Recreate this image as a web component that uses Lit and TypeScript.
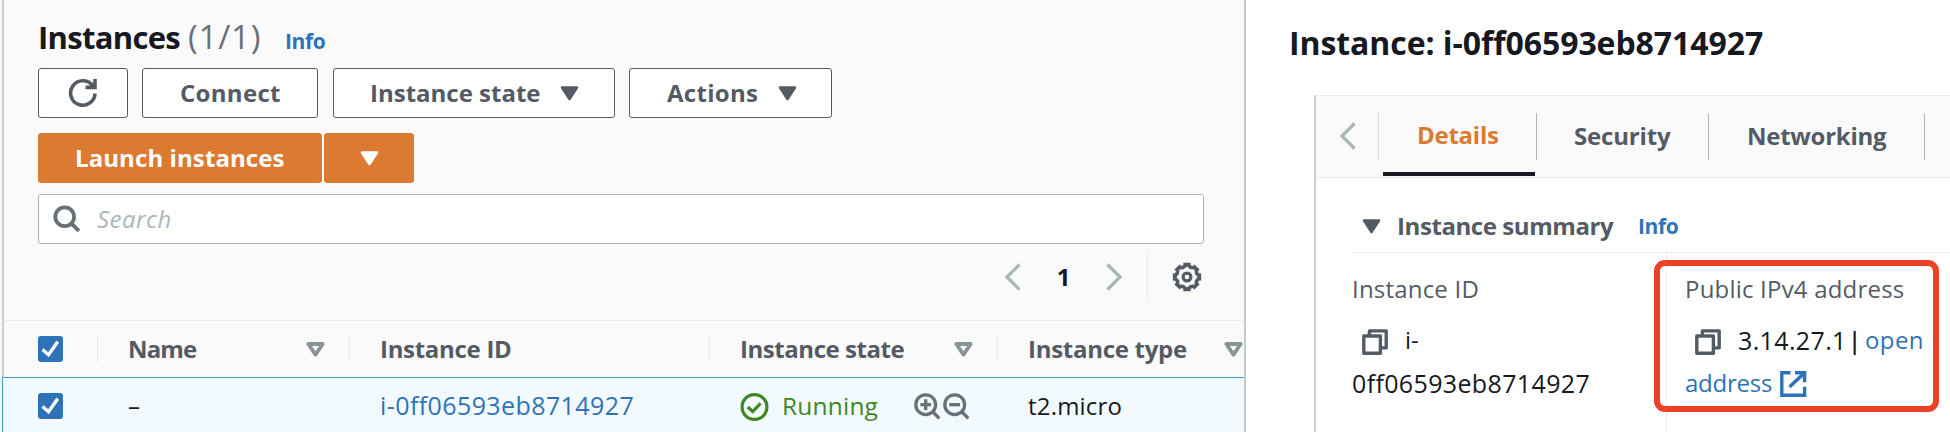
import { LitElement, html, css, svg } from "lit";
import { customElement } from "lit/decorators.js";

const caret = html`<svg class="caret" width="19" height="15" viewBox="0 0 19 15"><path d="M2 1.5h15L9.5 13z" fill="currentColor" stroke="currentColor" stroke-width="2.6" stroke-linejoin="round"/></svg>`;
const sort = html`<svg class="sort" width="19" height="15" viewBox="0 0 19 15"><path d="M2.3 2h14.4L9.5 12.6z" fill="none" stroke="#879596" stroke-width="3.8" stroke-linejoin="round"/></svg>`;
const chevron = (dir: "left" | "right") => html`<svg width="17" height="28" viewBox="0 0 17 28"><path d=${dir === "left" ? "M15.5 1.5L3 14L15.5 26.5" : "M1.5 1.5L14 14L1.5 26.5"} fill="none" stroke="#aab7b8" stroke-width="3.3"/></svg>`;
const refresh = html`<svg width="30" height="30" viewBox="0 0 30 30" fill="none" stroke="#545b64" stroke-width="3.6"><path d="M27 15.5A12.2 12.2 0 1 1 24.5 7.6"/><path d="M27 1v8.4H17.5" /><path d="M21 9l5-5v5z" fill="#545b64" stroke-width="1"/></svg>`;
const magnifier = html`<svg width="28" height="28" viewBox="0 0 28 28" fill="none" stroke="#687078" stroke-width="3.8"><circle cx="11.7" cy="11.7" r="9.4"/><path d="M18.3 18.3l7.6 7.6"/></svg>`;
const zoomIcon = (plus: boolean) => html`<svg width="27" height="27" viewBox="0 0 27 27" fill="none" stroke="#687078" stroke-width="3.3"><circle cx="11.7" cy="11.7" r="9.9"/><path d="M19 19l6.3 6.3"/><path d="M6.3 11.7h10.8"/>${plus ? svg`<path d="M11.7 6.3v10.8"/>` : ""}</svg>`;
const check = html`<svg class="box" width="25" height="26" viewBox="0 0 25 26"><rect width="25" height="26" rx="3" fill="#2e73b8"/><path d="M4.5 13.5l6 5.2L19.7 5.8" fill="none" stroke="#fff" stroke-width="3.4"/></svg>`;
const running = html`<svg width="29" height="28" viewBox="0 0 29 28" fill="none" stroke="#3f8624" stroke-width="3.2"><circle cx="14.5" cy="14" r="12.4"/><path d="M7.8 14l5 4.6 7.7-8.2"/></svg>`;
const copy = html`<svg class="copy" width="26" height="26" viewBox="0 0 26 26" fill="none" stroke="#545b64" stroke-width="3.4" stroke-linejoin="round"><path d="M1.8 7h16.6v17.2H1.8z"/><path d="M7.4 7V1.9h16.8v17H18.4"/></svg>`;
const external = html`<svg class="ext" width="27" height="26" viewBox="0 0 27 26" fill="none" stroke="#2e73b8" stroke-width="3.4"><path d="M10.5 1.8H1.8v22.4h22.8v-8.4"/><path d="M15 1.8h9.6v9.4"/><path d="M9.5 16L24 2.2"/></svg>`;

function gearPath(): string {
  const n = 8, c = 15, outer = 14.6, inner = 12.4;
  const pts: string[] = [];
  const hole: string[] = [];
  for (let i = 0; i < n; i++) {
    const a = (i * 2 * Math.PI) / n - Math.PI / 2;
    for (const [off, r] of [[-0.25, outer], [0.25, outer], [0.3, inner], [0.485, inner]] as const) {
      pts.push(`${(c + r * Math.cos(a + off)).toFixed(2)} ${(c + r * Math.sin(a + off)).toFixed(2)}`);
    }
    for (const [off, r] of [[0, 10.6], [0.39, 8.5]] as const) {
      hole.push(`${(c + r * Math.cos(a + off)).toFixed(2)} ${(c + r * Math.sin(a + off)).toFixed(2)}`);
    }
  }
  return `M${pts.join("L")}ZM${hole.join("L")}Z`;
}
const gear = html`<svg width="30" height="30" viewBox="0 0 30 30"><path d=${gearPath()} fill="#545b64" fill-rule="evenodd"/><circle cx="15" cy="15" r="3.9" fill="none" stroke="#545b64" stroke-width="3.2"/></svg>`;

const shared = css`
  * { box-sizing: border-box; }
  svg { display: block; flex: none; }
  .info { color: #2e73b8; font-weight: 700; font-size: 21px; letter-spacing: -0.4px; }
  .t { display: block; padding-bottom: 2px; }
`;

@customElement("instance-list")
class InstanceList extends LitElement {
  static styles = [shared, css`
    :host { display: block; width: 1246px; height: 432px; padding-left: 2px; background: #f6f7f7; overflow: hidden; flex: none; }
    .panel { height: 432px; background: #fafafa; border-left: 2px solid #c9d0d1; border-right: 2px solid #c3cacc; display: flex; flex-direction: column; }
    .head { padding: 17px 38px 0 34px; height: 320px; flex: none; }
    .title { display: flex; align-items: baseline; height: 51px; line-height: 40px; font-size: 31px; color: #16191f; }
    .title b { letter-spacing: -0.7px; width: 150px; }
    .count { color: #687078; font-size: 33px; letter-spacing: 0.8px; width: 97px; }
    .buttons { display: flex; }
    .btn { display: flex; align-items: center; height: 50px; background: #fff; border: 1px solid #545b64; border-radius: 3px; color: #545b64; font-weight: 700; white-space: nowrap; }
    .refresh { width: 90px; justify-content: center; margin-right: 14px; }
    .connect { width: 176px; padding-left: 37px; letter-spacing: 0.3px; margin-right: 15px; }
    .state { width: 282px; padding: 0 35px 0 36px; justify-content: space-between; margin-right: 14px; }
    .actions { width: 203px; padding: 0 34px 0 37px; justify-content: space-between; letter-spacing: 0.29px; }
    .launch { margin: 15px 0 11px; gap: 2px; }
    .primary { background: #dd7a32; border-color: #dd7a32; color: #fff; }
    .wide { width: 284px; padding-left: 36px; letter-spacing: 0.09px; }
    .drop { width: 90px; justify-content: center; }
    .search { display: flex; align-items: center; width: 1166px; height: 50px; border: 1px solid #aab7b8; border-radius: 3px; background: #fff; padding-left: 14px; gap: 16px; color: #aab7b8; font-style: italic; letter-spacing: 0.5px; }
    .pager { display: flex; align-items: center; justify-content: flex-end; height: 51px; margin-top: 7px; padding-right: 4px; }
    .num { width: 85px; text-align: center; font-weight: 700; color: #16191f; padding-bottom: 1px; }
    .settings { border-left: 1px solid #eaeded; height: 51px; margin-left: 24px; padding-left: 24px; display: flex; align-items: center; }
    .row { display: grid; grid-template-columns: 93px 252px 360px 288px 1fr; flex: none; align-items: center; white-space: nowrap; }
    .row > :first-child { padding-left: 34px; }
    .th { height: 57px; border-top: 1px solid #eaeded; color: #545b64; font-weight: 700; }
    .cell { display: flex; align-items: center; height: 27px; padding: 0 24px 0 30px; border-left: 1px solid #eaeded; }
    .th .cell { justify-content: space-between; }
    .th .cell:last-child { padding-right: 1px; }
    .selected { height: 58px; border-top: 1px solid #3ba0bf; border-left: 1px solid #3ba0bf; background: #f3faff; margin: 0 0 0 -2px; padding-left: 1px; color: #16191f; }
    .selected .cell { border-color: transparent; padding-right: 0; }
    .selected .box { margin-bottom: 1px; }
    .link { color: #2e73b8; font-size: 25px; letter-spacing: 0.41px; }
    .run { color: #3f8624; font-size: 24.5px; letter-spacing: 0.2px; }
    .run span { margin-left: 13px; width: 132px; }
    .run svg + svg { margin-left: 2px; }
    .name { letter-spacing: -0.86px; }
    .id { letter-spacing: -0.3px; }
    .st { letter-spacing: -0.45px; }
    .ty { letter-spacing: -0.28px; }
    .mi { letter-spacing: 0.19px; }
  `];
  render() {
    return html`<div class="panel">
      <div class="head">
        <div class="title"><b>Instances</b><span class="count">(1/1)</span><span class="info">Info</span></div>
        <div class="buttons">
          <div class="btn refresh">${refresh}</div>
          <div class="btn connect"><span class="t">Connect</span></div>
          <div class="btn state"><span class="t">Instance state</span>${caret}</div>
          <div class="btn actions"><span class="t">Actions</span>${caret}</div>
        </div>
        <div class="buttons launch">
          <div class="btn primary wide"><span class="t">Launch instances</span></div>
          <div class="btn primary drop">${caret}</div>
        </div>
        <div class="search">${magnifier}<span class="t">Search</span></div>
        <div class="pager">${chevron("left")}<span class="num">1</span>${chevron("right")}<div class="settings">${gear}</div></div>
      </div>
      <div class="row th">
        <div>${check}</div>
        <div class="cell"><span class="t name">Name</span>${sort}</div>
        <div class="cell"><span class="t id">Instance ID</span></div>
        <div class="cell"><span class="t st">Instance state</span>${sort}</div>
        <div class="cell"><span class="t ty">Instance type</span>${sort}</div>
      </div>
      <div class="row selected">
        <div>${check}</div>
        <div class="cell"><span class="t">–</span></div>
        <div class="cell link"><span class="t">i-0ff06593eb8714927</span></div>
        <div class="cell run">${running}<span class="t">Running</span>${zoomIcon(true)}${zoomIcon(false)}</div>
        <div class="cell"><span class="t mi">t2.micro</span></div>
      </div>
    </div>`;
  }
}

@customElement("instance-detail")
class InstanceDetail extends LitElement {
  static styles = [shared, css`
    :host { display: block; flex: 1; height: 432px; background: #fff; overflow: hidden; padding-left: 43px; }
    .title { height: 95px; padding-top: 23px; line-height: 40px; font-size: 32px; font-weight: 700; color: #16191f; letter-spacing: -0.08px; white-space: nowrap; }
    .card { margin-left: 25px; height: 340px; border-left: 2px solid #c9d0d1; border-top: 1px solid #eaeded; }
    .tabs { display: flex; height: 82px; background: #fafafa; border-bottom: 1px solid #eaeded; color: #545b64; font-weight: 700; }
    .prev { width: 63px; height: 50px; margin-top: 15px; padding-left: 23px; display: flex; align-items: center; border-right: 1px solid #d5dbdb; }
    .tab { height: 47px; margin-top: 17px; border-right: 1px solid #aab7b8; display: flex; align-items: center; }
    .active { width: 157px; height: 80px; margin-top: 0; border: 0; color: #dd7a32; padding: 0 1px 0 4px; }
    .active span { flex: 1; height: 80px; line-height: 78px; border-bottom: 4px solid #16191f; padding-left: 34px; letter-spacing: -0.25px; }
    .sec { width: 173px; border-left: 1px solid #aab7b8; padding-left: 37px; letter-spacing: -0.16px; }
    .net { width: 216px; padding-left: 38px; letter-spacing: -0.27px; }
    .body { padding-left: 36px; }
    .summary { display: flex; align-items: center; height: 75px; padding: 22px 0 0 10px; border-bottom: 1px solid #eaeded; color: #545b64; font-weight: 700; }
    .summary span { letter-spacing: -0.42px; margin-left: 16px; width: 241px; }
    .summary .info { padding-top: 1px; }
    .cols { display: grid; grid-template-columns: 314px 1fr; height: 190px; }
    .col { padding-top: 15px; line-height: 42px; color: #16191f; white-space: nowrap; }
    .col + .col { border-left: 1px solid #eaeded; padding-left: 18px; }
    .label { color: #545b64; line-height: 42px; height: 51px; letter-spacing: 0.2px; }
    .line { display: flex; align-items: center; height: 42.5px; }
    .copy { margin: 4px 17px 0 10px; }
    .id { font-size: 25px; letter-spacing: 0.36px; }
    .ip { font-size: 25px; letter-spacing: 0.36px; width: 110px; }
    .bar { width: 17px; font-weight: 600; }
    .link { color: #2e73b8; letter-spacing: -0.24px; }
    .open { color: #2e73b8; letter-spacing: 0.4px; }
    .ext { margin: 3px 0 0 8px; }
    .mark { position: absolute; left: 1654px; top: 260px; width: 285px; height: 152px; border: 6px solid #ec4127; border-radius: 11px; }
  `];
  render() {
    return html`
      <div class="title">Instance: i-0ff06593eb8714927</div>
      <div class="card">
        <div class="tabs">
          <div class="prev">${chevron("left")}</div>
          <div class="tab active"><span>Details</span></div>
          <div class="tab sec"><span class="t">Security</span></div>
          <div class="tab net"><span class="t">Networking</span></div>
        </div>
        <div class="body">
          <div class="summary">${caret}<span class="t">Instance summary</span><div class="info">Info</div></div>
          <div class="cols">
            <div class="col">
              <div class="label">Instance ID</div>
              <div class="line">${copy}i-</div>
              <div class="line id">0ff06593eb8714927</div>
            </div>
            <div class="col">
              <div class="label">Public IPv4 address</div>
              <div class="line">${copy}<div class="ip">3.14.27.1</div><div class="bar">|</div><div class="open">open</div></div>
              <div class="line link">address${external}</div>
            </div>
          </div>
        </div>
      </div>
      <div class="mark"></div>`;
  }
}

@customElement("app-root")
class AppRoot extends LitElement {
  static styles = css`
    * { box-sizing: border-box; }
    :host { display: flex; position: relative; width: 1950px; height: 432px; overflow: hidden; font-family: "Open Sans", "Noto Sans", sans-serif; font-size: 24px; line-height: 33px; background: #fff; }
  `;
  render() {
    return html`<instance-list></instance-list><instance-detail></instance-detail>`;
  }
}
